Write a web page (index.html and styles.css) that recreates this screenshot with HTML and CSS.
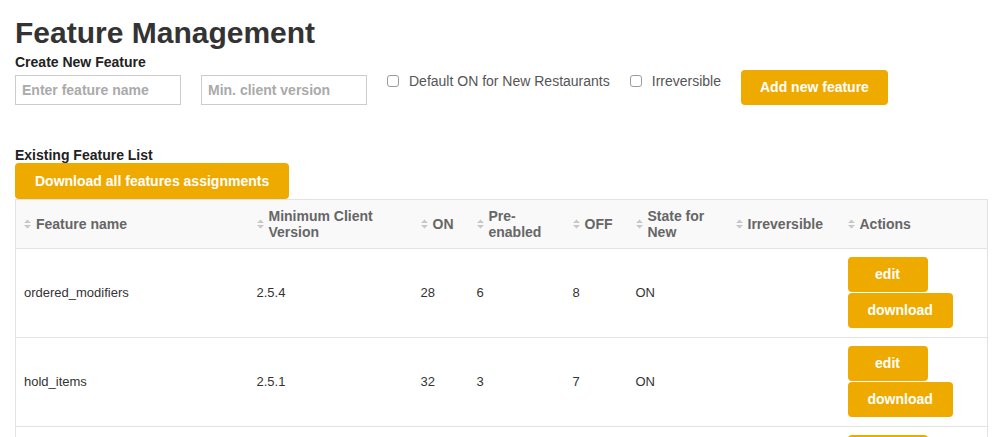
FILE: index.html
```html
<!DOCTYPE html>
<html lang="en">
<head>
<meta charset="utf-8">
<title>Feature Management</title>
<link rel="stylesheet" href="styles.css">
</head>
<body>
<h1 class="page-title">Feature Management</h1>
<div class="section-title">Create New Feature</div>
<div class="create-row">
  <input class="text-input" type="text" placeholder="Enter feature name">
  <input class="text-input" type="text" placeholder="Min. client version">
  <label class="check-label"><input class="check" type="checkbox"><span>Default ON for New Restaurants</span></label>
  <label class="check-label"><input class="check" type="checkbox"><span>Irreversible</span></label>
  <button class="btn">Add new feature</button>
</div>

<div class="section-title list-title">Existing Feature List</div>
<button class="btn btn-wide">Download all features assignments</button>

<table class="feature-table">
  <colgroup>
    <col class="c-name"><col class="c-min"><col class="c-on"><col class="c-pre"><col class="c-off"><col class="c-state"><col class="c-irr"><col class="c-act">
  </colgroup>
  <thead>
    <tr>
      <th><div class="th-in"><svg class="sort" viewBox="0 0 7 10"><path d="M0 4 L3.5 0.5 L7 4 Z M0 6 L3.5 9.5 L7 6 Z"/></svg><span>Feature name</span></div></th>
      <th><div class="th-in"><svg class="sort" viewBox="0 0 7 10"><path d="M0 4 L3.5 0.5 L7 4 Z M0 6 L3.5 9.5 L7 6 Z"/></svg><span>Minimum Client<br>Version</span></div></th>
      <th><div class="th-in"><svg class="sort" viewBox="0 0 7 10"><path d="M0 4 L3.5 0.5 L7 4 Z M0 6 L3.5 9.5 L7 6 Z"/></svg><span>ON</span></div></th>
      <th><div class="th-in"><svg class="sort" viewBox="0 0 7 10"><path d="M0 4 L3.5 0.5 L7 4 Z M0 6 L3.5 9.5 L7 6 Z"/></svg><span>Pre-<br>enabled</span></div></th>
      <th><div class="th-in"><svg class="sort" viewBox="0 0 7 10"><path d="M0 4 L3.5 0.5 L7 4 Z M0 6 L3.5 9.5 L7 6 Z"/></svg><span>OFF</span></div></th>
      <th><div class="th-in"><svg class="sort" viewBox="0 0 7 10"><path d="M0 4 L3.5 0.5 L7 4 Z M0 6 L3.5 9.5 L7 6 Z"/></svg><span>State for<br>New</span></div></th>
      <th><div class="th-in"><svg class="sort" viewBox="0 0 7 10"><path d="M0 4 L3.5 0.5 L7 4 Z M0 6 L3.5 9.5 L7 6 Z"/></svg><span>Irreversible</span></div></th>
      <th><div class="th-in"><svg class="sort" viewBox="0 0 7 10"><path d="M0 4 L3.5 0.5 L7 4 Z M0 6 L3.5 9.5 L7 6 Z"/></svg><span>Actions</span></div></th>
    </tr>
  </thead>
  <tbody>
    <tr>
      <td>ordered_modifiers</td><td>2.5.4</td><td>28</td><td>6</td><td>8</td><td>ON</td><td></td>
      <td><div class="actions"><button class="btn btn-edit">edit</button><button class="btn">download</button></div></td>
    </tr>
    <tr>
      <td>hold_items</td><td>2.5.1</td><td>32</td><td>3</td><td>7</td><td>ON</td><td></td>
      <td><div class="actions"><button class="btn btn-edit">edit</button><button class="btn">download</button></div></td>
    </tr>
    <tr>
      <td>split_checks</td><td>2.4.9</td><td>30</td><td>4</td><td>8</td><td>OFF</td><td></td>
      <td><div class="actions"><button class="btn btn-edit">edit</button><button class="btn">download</button></div></td>
    </tr>
  </tbody>
</table>
</body>
</html>
```
FILE: styles.css
```css
html, body {
  margin: 0;
  padding: 0;
  background: #ffffff;
}
body {
  padding: 0 16px 0 15px;
  font-family: "Liberation Sans", Arial, Helvetica, sans-serif;
  color: #333333;
}
.page-title {
  margin: 0;
  padding-top: 16px;
  font-size: 30px;
  line-height: 33px;
  font-weight: bold;
  color: #333333;
}
.section-title {
  margin-top: 5px;
  font-size: 14px;
  line-height: 16px;
  font-weight: bold;
  color: #222222;
}
.list-title {
  margin-top: 42px;
}
.create-row {
  display: flex;
  align-items: flex-start;
  gap: 20px;
}
.text-input {
  box-sizing: border-box;
  width: 166px;
  height: 30px;
  margin: 5px 0 0 0;
  padding: 0 6px;
  border: 1px solid #cccccc;
  border-radius: 0;
  font-family: "Liberation Sans", Arial, Helvetica, sans-serif;
  font-size: 14px;
  font-weight: bold;
  color: #333333;
  outline: none;
}
.text-input::placeholder {
  color: #aaaaaa;
  font-weight: bold;
}
.check-label {
  display: flex;
  align-items: center;
  gap: 10px;
  margin-top: 3px;
  font-size: 14px;
  line-height: 16px;
  color: #555555;
}
.check {
  appearance: none;
  -webkit-appearance: none;
  box-sizing: border-box;
  width: 12px;
  height: 12px;
  margin: 0;
  border: 1px solid #9b9b9b;
  border-radius: 3px;
  background: #ffffff;
}
.btn {
  box-sizing: border-box;
  height: 35px;
  padding: 0 19px;
  border: none;
  border-radius: 4px;
  background: #efaa00;
  color: #ffffff;
  font-family: "Liberation Sans", Arial, Helvetica, sans-serif;
  font-size: 14px;
  font-weight: bold;
  line-height: 35px;
  cursor: pointer;
}
.btn-wide {
  display: block;
  height: 36px;
  padding: 0 20px;
}
.btn-edit {
  min-width: 80px;
}
.feature-table {
  width: 100%;
  border-collapse: collapse;
  table-layout: fixed;
  border: 1px solid #e3e3e3;
}
.c-name { width: 233px; }
.c-min { width: 164px; }
.c-on { width: 56px; }
.c-pre { width: 96px; }
.c-off { width: 63px; }
.c-state { width: 100px; }
.c-irr { width: 112px; }
.c-act { width: 148px; }
.feature-table th {
  background: #f9f9f9;
  padding: 8px;
  border-bottom: 1px solid #e3e3e3;
  text-align: left;
  font-size: 14px;
  line-height: 16px;
  font-weight: bold;
  color: #666666;
  height: 32px;
}
.th-in {
  display: flex;
  align-items: center;
  gap: 5px;
}
.sort {
  width: 7px;
  height: 10px;
  flex: none;
  fill: #c8c8c8;
}
.feature-table td {
  padding: 8px 8px 9px 8px;
  border-bottom: 1px solid #e3e3e3;
  vertical-align: middle;
  font-size: 13px;
  line-height: 16px;
  color: #333333;
}
.actions {
  display: flex;
  flex-direction: column;
  align-items: flex-start;
  gap: 1px;
}
.actions .btn {
  padding: 0 20px;
}
```
